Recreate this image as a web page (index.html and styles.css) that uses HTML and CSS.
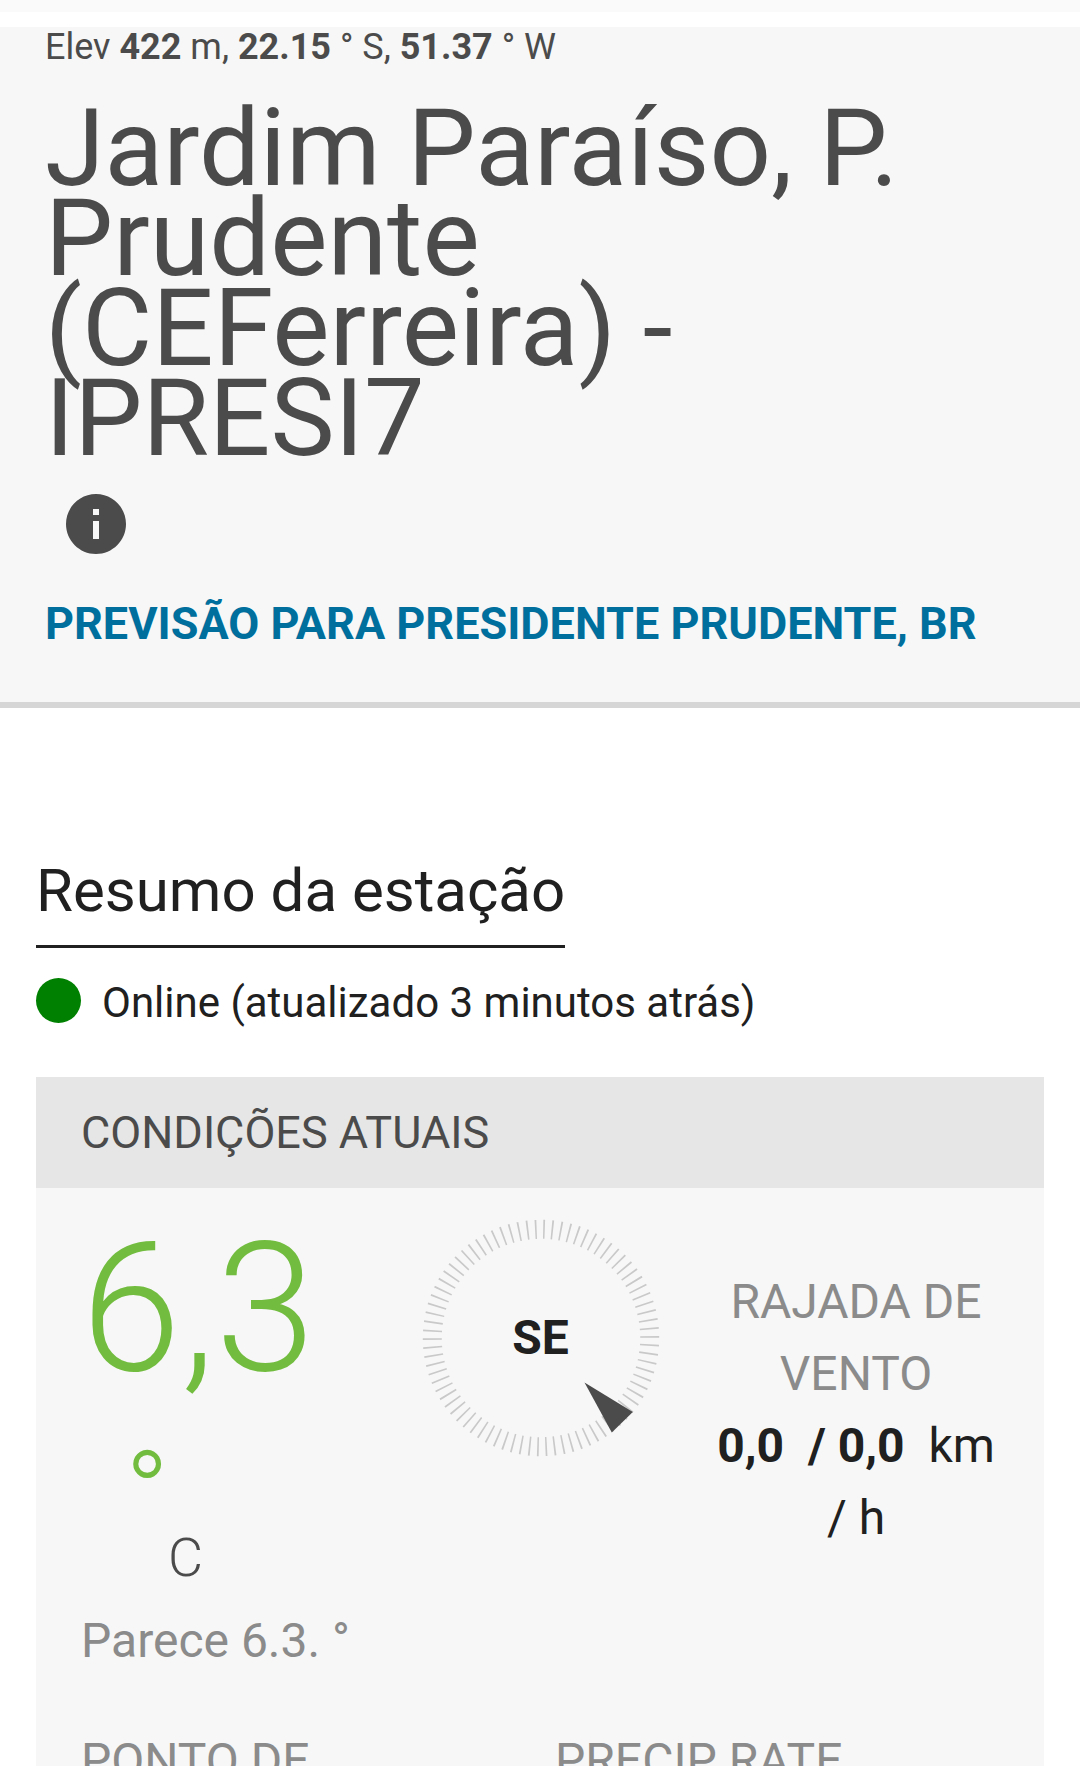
FILE: index.html
```html
<!DOCTYPE html>
<html lang="pt-BR">
<head>
    <meta charset="UTF-8">
    <meta name="viewport" content="width=device-width, initial-scale=1.0">
    <title>Jardim Paraíso, P. Prudente (CEFerreira) - IPRESI7</title>
    <link rel="stylesheet" href="styles.css">
</head>
<body>
    <div class="ad-strip"></div>

    <header class="station-header">
        <p class="station-coords">Elev <strong>422</strong> m, <strong>22.15</strong> ° S, <strong>51.37</strong> ° W</p>
        <h1>Jardim Paraíso, P. Prudente (CEFerreira) - IPRESI7</h1>
        <svg class="info-icon" viewBox="0 0 24 24">
            <path d="M12 2C6.48 2 2 6.48 2 12s4.48 10 10 10 10-4.48 10-10S17.52 2 12 2zm1 15h-2v-6h2v6zm0-8h-2V7h2v2z"/>
        </svg>
        <a class="forecast-link" href="#">Previsão para Presidente Prudente, BR</a>
    </header>

    <main class="summary">
        <h2>Resumo da estação</h2>
        <div class="status">
            <span class="status-dot"></span>
            <span>Online (atualizado 3 minutos atrás)</span>
        </div>

        <section class="card">
            <h3 class="card-title">Condições atuais</h3>
            <div class="current">
                <div class="temp">
                    <div class="temp-value">6,3</div>
                    <div class="temp-degree">°</div>
                    <div class="temp-unit">C</div>
                    <div class="feels-like">Parece 6.3. °</div>
                </div>
                <div class="compass">
                    <svg viewBox="0 0 240 240">
                        <!-- 82 ticks round the dial -->
                        <circle class="dial" cx="120" cy="120" r="108.7" pathLength="820"/>
                        <path class="needle" d="M163.5 164.5L211.8 194L190.8 214.5z"/>
                    </svg>
                    <span class="compass-label">SE</span>
                </div>
                <div class="wind">
                    <div class="label">Rajada de vento</div>
                    <div><strong>0,0 &nbsp;/ 0,0</strong> &nbsp;km / h</div>
                </div>
            </div>
            <div class="readings">
                <div class="label">Ponto de</div>
                <div class="label">Precip Rate</div>
            </div>
        </section>
    </main>
</body>
</html>
```

FILE: styles.css
```css
* {
    box-sizing: border-box;
}
body {
    font-family: Roboto, sans-serif;
    font-size: 48px;
    line-height: 72px;
    background-color: #fff;
    color: #202020;
    margin: 0;
    height: 1766px;
    overflow: hidden;
}
h1, h2, h3, p {
    margin: 0;
    font-weight: 400;
}
.ad-strip {
    height: 12px;
    margin-bottom: 15px;
    background-color: #fafafa;
}
.station-header {
    height: 681px;
    padding: 0 45px;
    background-color: #f7f7f7;
    border-bottom: 6px solid #d6d6d6;
    color: #4b4b4b;
}
.station-coords {
    padding-top: 1px;
    font-size: 36px;
    line-height: 38px;
}
h1 {
    width: 900px;
    margin-top: 37px;
    font-size: 108px;
    line-height: 90px;
}
.info-icon {
    display: block;
    width: 72px;
    height: 72px;
    margin: 25px 0 0 15px;
    fill: #4b4b4b;
}
.forecast-link {
    display: block;
    margin-top: 28px;
    color: #006f9e;
    font-size: 45px;
    font-weight: 700;
    text-decoration: none;
    text-transform: uppercase;
}
.summary {
    padding: 147px 36px 0;
}
h2 {
    width: fit-content;
    padding-bottom: 18px;
    border-bottom: 3px solid #202020;
    font-size: 60px;
}
.status {
    display: flex;
    align-items: center;
    gap: 21px;
    height: 64px;
    margin-top: 23px;
    font-size: 42px;
}
.status-dot {
    width: 45px;
    height: 45px;
    margin-bottom: 5px;
    border-radius: 50%;
    background-color: #008000;
}
.card {
    margin-top: 42px;
    background-color: #f7f7f7;
}
.card-title {
    padding: 0 45px;
    background-color: #e6e6e6;
    color: #4b4b4b;
    font-size: 45px;
    line-height: 111px;
    text-transform: uppercase;
}
.current {
    display: grid;
    grid-template-columns: 306px 306px 306px;
    column-gap: 5px;
    padding: 0 45px;
    height: 537px;
}
.temp-value {
    padding-top: 31px;
    color: #72bd3f;
    font-size: 180px;
    font-weight: 300;
    line-height: 180px;
}
.temp-degree {
    margin: 67px 0 0 44px;
    color: #72bd3f;
    font-size: 117px;
    font-weight: 300;
    line-height: 56px;
}
.temp-unit {
    margin: 0 0 11px 87px;
    color: #4b4b4b;
    font-size: 54px;
    font-weight: 300;
}
.feels-like {
    color: #8b8b8b;
    white-space: nowrap;
}
.compass {
    position: relative;
    width: 240px;
    height: 240px;
    margin: 30px 0 0 28.5px;
}
.compass svg {
    display: block;
}
.dial {
    fill: none;
    stroke: #c9c9c9;
    stroke-width: 19;
    stroke-dasharray: 2 8;
    transform: rotate(-1deg);
    transform-origin: center;
}
.needle {
    fill: #4b4b4b;
}
.compass-label {
    position: absolute;
    inset: 84px 0 auto;
    font-weight: 700;
    text-align: center;
}
.wind {
    padding-top: 78px;
    text-align: center;
}
.label {
    color: #8b8b8b;
    text-transform: uppercase;
}
.readings {
    display: grid;
    grid-template-columns: 474px 1fr;
    padding: 0 45px;
}
```
